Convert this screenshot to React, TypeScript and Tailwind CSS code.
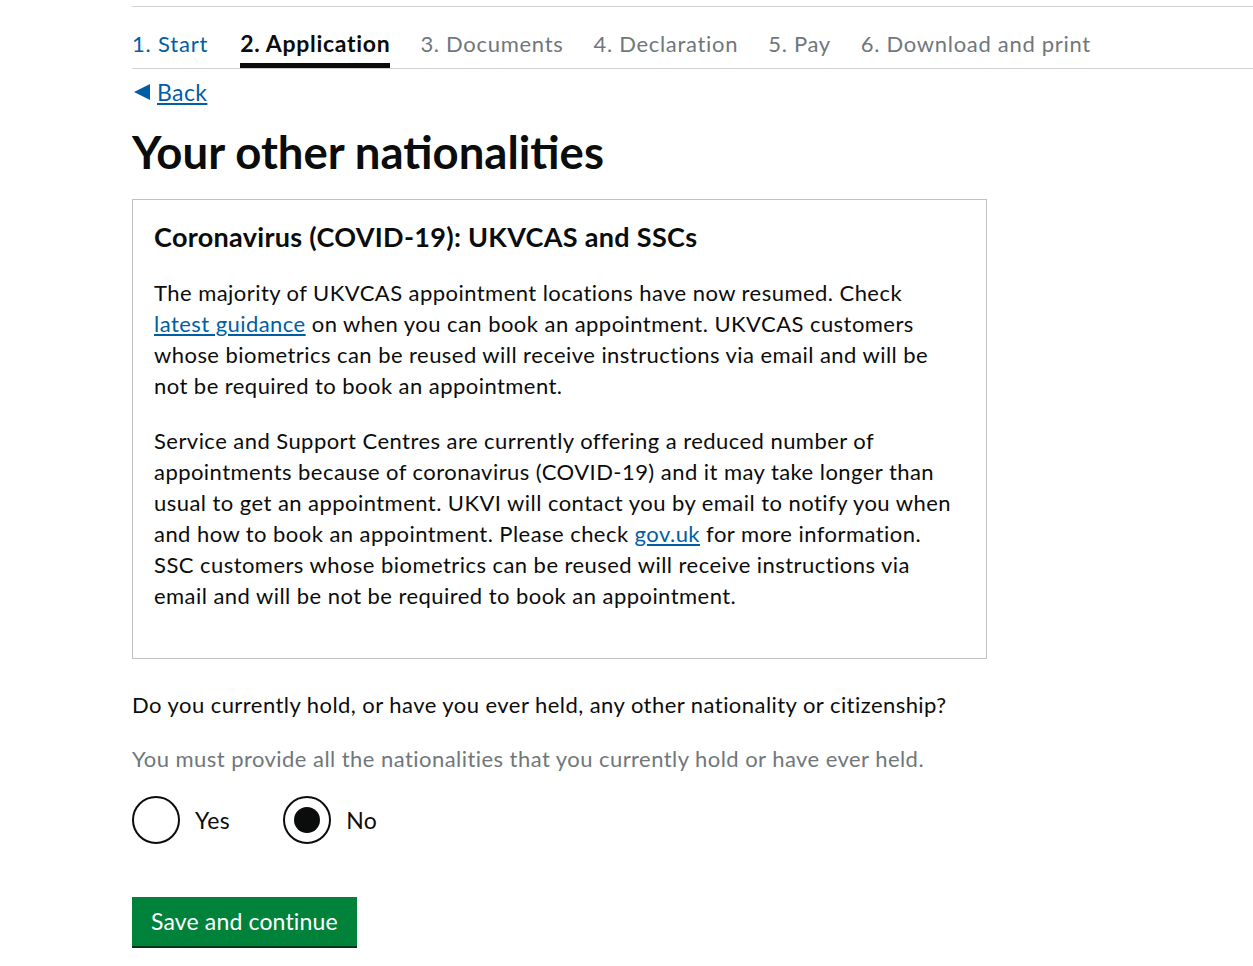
import React, { useState } from 'react';

const steps = [
  { label: '1. Start', state: 'done' },
  { label: '2. Application', state: 'current' },
  { label: '3. Documents', state: 'todo' },
  { label: '4. Declaration', state: 'todo' },
  { label: '5. Pay', state: 'todo' },
  { label: '6. Download and print', state: 'todo' },
];

const Radio = ({ label, checked, onClick }: { label: string; checked: boolean; onClick: () => void }) => (
  <button onClick={onClick} className="flex items-center gap-[15px] text-left">
    <span className="w-[48px] h-[48px] rounded-full border-2 border-[#0b0c0c] flex items-center justify-center bg-white">
      {checked && <span className="w-[26px] h-[26px] rounded-full bg-[#0b0c0c]" />}
    </span>
    <span className="text-[23px] tracking-[0.4px] text-[#0b0c0c]">{label}</span>
  </button>
);

export default function App() {
  const [answer, setAnswer] = useState<'yes' | 'no'>('no');

  return (
    <div className="min-h-screen bg-white pl-[132px] pt-[6px] text-[#0b0c0c]" style={{ fontFamily: 'Lato, "Noto Sans", sans-serif' }}>
      <nav className="border-t border-b border-[#cfd1d2] flex gap-[30px] h-[63px] items-end">
        {steps.map((s) => (
          <div
            key={s.label}
            className={`leading-none ${
              s.state === 'current'
                ? 'text-[23px] tracking-[0.7px] font-bold text-[#0b0c0c] border-b-[5px] border-[#0b0c0c] pb-[8px] ml-[2px]'
                : s.state === 'done'
                ? 'text-[22px] tracking-[0.8px] text-[#005ea5] pb-[13px]'
                : 'text-[22px] tracking-[0.7px] text-[#6f777b] pb-[13px]'
            }`}
          >
            {s.label}
          </div>
        ))}
      </nav>

      <div className="w-[855px]">
        <a href="#" className="mt-[8px] inline-flex items-center gap-[7px] text-[23px] tracking-[0.4px] text-[#005ea5] leading-[30px]">
          <span className="ml-[2px] w-0 h-0 border-y-[8px] border-y-transparent border-r-[16px] border-r-[#005ea5]" />
          <span className="underline underline-offset-2">Back</span>
        </a>

        <h1 className="mt-[20px] text-[45.5px] font-bold leading-[50px]">Your other nationalities</h1>

        <div className="mt-[22px] border border-[#bfc1c3] pl-[21px] pr-[30px] pt-[20px] pb-[47px]">
          <h2 className="text-[27px] font-bold leading-[34px] tracking-[0.3px]">Coronavirus (COVID-19): UKVCAS and SSCs</h2>
          <div className="text-[22px] leading-[31px] tracking-[0.45px]">
            <p className="mt-[23px]">
              The majority of UKVCAS appointment locations have now resumed. Check{' '}
              <a href="#" className="text-[#005ea5] underline underline-offset-2">latest guidance</a> on when you can book an appointment. UKVCAS customers
              whose biometrics can be reused will receive instructions via email and will be not be required to book an appointment.
            </p>
            <p className="mt-[24px]">
              Service and Support Centres are currently offering a reduced number of appointments because of coronavirus (COVID-19) and it may take longer than
              usual to get an appointment. UKVI will contact you by email to notify you when and how to book an appointment. Please check{' '}
              <a href="#" className="text-[#005ea5] underline underline-offset-2">gov.uk</a> for more information. SSC customers whose biometrics can be reused will
              receive instructions via email and will be not be required to book an appointment.
            </p>
          </div>
        </div>

        <div className="text-[22px] leading-[31px] tracking-[0.45px]">
          <p className="mt-[30px]">Do you currently hold, or have you ever held, any other nationality or citizenship?</p>
          <p className="mt-[23px] text-[#6f777b]">You must provide all the nationalities that you currently hold or have ever held.</p>
        </div>

        <div className="mt-[22px] flex gap-[53px]">
          <Radio label="Yes" checked={answer === 'yes'} onClick={() => setAnswer('yes')} />
          <Radio label="No" checked={answer === 'no'} onClick={() => setAnswer('no')} />
        </div>

        <button className="mt-[53px] bg-[#00823b] text-white text-[23px] tracking-[0.15px] px-[19px] h-[49px] shadow-[0_2px_0_#003618]">Save and continue</button>
      </div>
    </div>
  );
}
